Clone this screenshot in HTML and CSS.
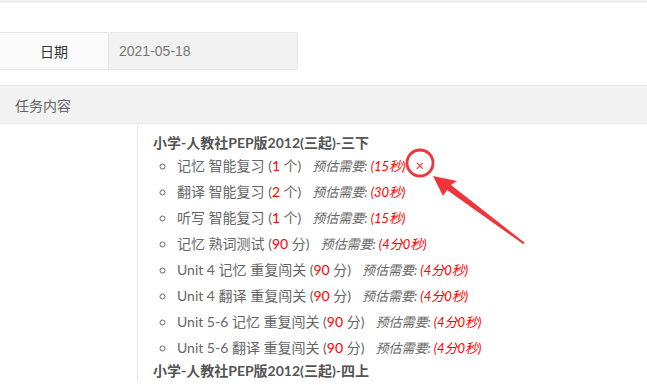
FILE: index.html
```html
<!DOCTYPE html>
<html lang="zh-CN">
<head>
    <meta charset="UTF-8">
    <title>任务详情</title>
    <link rel="stylesheet" href="styles.css">
</head>
<body>
    <div class="topbar"></div>
    <div class="form-row">
        <div class="form-label">日期</div>
        <div class="form-value">2021-05-18</div>
    </div>
    <div class="panel">
        <div class="panel-head">任务内容</div>
        <div class="panel-body">
            <div class="panel-side"></div>
            <div class="panel-main">
                <div class="book">小学-人教社PEP版2012(三起)-三下</div>
                <ul class="tasks">
                    <li>记忆 智能复习 (<span class="num">1</span> 个)<span class="est">预估需要: <em>(15秒)</em></span><span class="del">×</span></li>
                    <li>翻译 智能复习 (<span class="num">2</span> 个)<span class="est">预估需要: <em>(30秒)</em></span></li>
                    <li>听写 智能复习 (<span class="num">1</span> 个)<span class="est">预估需要: <em>(15秒)</em></span></li>
                    <li>记忆 熟词测试 (<span class="num">90</span> 分)<span class="est">预估需要: <em>(4分0秒)</em></span></li>
                    <li>Unit 4 记忆 重复闯关 (<span class="num">90</span> 分)<span class="est">预估需要: <em>(4分0秒)</em></span></li>
                    <li>Unit 4 翻译 重复闯关 (<span class="num">90</span> 分)<span class="est">预估需要: <em>(4分0秒)</em></span></li>
                    <li>Unit 5-6 记忆 重复闯关 (<span class="num">90</span> 分)<span class="est">预估需要: <em>(4分0秒)</em></span></li>
                    <li>Unit 5-6 翻译 重复闯关 (<span class="num">90</span> 分)<span class="est">预估需要: <em>(4分0秒)</em></span></li>
                </ul>
                <div class="book">小学-人教社PEP版2012(三起)-四上</div>
            </div>
        </div>
    </div>

    <!-- annotation: circle + arrow pointing at the delete button -->
    <svg class="mark" width="647" height="385" viewBox="0 0 647 385">
        <circle cx="420" cy="163" r="13" fill="none" stroke="#f0353a" stroke-width="2.8"/>
        <path d="M433 176 L457 181 L451 185 L525 243 L523 244 L447 190 L443 196 Z" fill="#f0353a"/>
    </svg>
</body>
</html>
```

FILE: styles.css
```css
body {
    margin: 0;
    background: #fff;
    font-family: Lato, "Noto Sans CJK SC", sans-serif;
    color: #666;
    font-size: 14px;
    position: relative;
}
.topbar {
    height: 3px;
    background: #f0f0f0;
}
.form-row {
    display: flex;
    margin-top: 29px;
    height: 38px;
}
.form-label {
    width: 108px;
    box-sizing: border-box;
    border: 1px solid #e6e6e6;
    border-left: none;
    border-right: none;
    background: #fafafa;
    color: #333;
    font-size: 14px;
    display: flex;
    align-items: center;
    justify-content: center;
}
.form-value {
    width: 190px;
    box-sizing: border-box;
    border: 1px solid #e6e6e6;
    border-radius: 0 2px 2px 0;
    background: #f2f2f2;
    color: #777;
    font-family: "Liberation Sans", Arial, sans-serif;
    font-size: 14px;
    padding-left: 10px;
    display: flex;
    align-items: center;
}
.panel {
    margin-top: 15px;
}
.panel-head {
    height: 39px;
    box-sizing: border-box;
    border-top: 1px solid #e6e6e6;
    border-bottom: 1px solid #e6e6e6;
    background: #f2f2f2;
    padding-left: 15px;
    font-size: 14px;
    display: flex;
    align-items: center;
}
.panel-body {
    display: flex;
}
.panel-side {
    width: 137px;
    border-right: 1px solid #e6e6e6;
}
.panel-main {
    padding: 9px 0 0 15px;
}
.book {
    font-weight: bold;
    color: #555;
    line-height: 20px;
    height: 20px;
}
.tasks {
    margin: 0;
    padding: 0 0 0 23px;
    list-style: circle;
}
.tasks li {
    height: 26px;
    line-height: 26px;
    padding-left: 1px;
}
.num {
    color: #f00;
}
.est {
    margin-left: 11px;
    font-size: 13px;
    font-style: italic;
    color: #666;
    line-height: 1;
}
.est em {
    color: #f00;
}
.del {
    color: #f33;
    font-size: 15px;
    margin-left: 10px;
    line-height: 1;
}
.mark {
    position: absolute;
    left: 0;
    top: 0;
    pointer-events: none;
}
```
